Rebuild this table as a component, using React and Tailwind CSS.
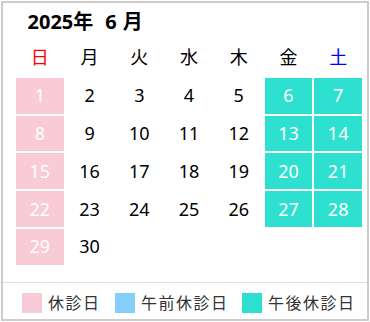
import React from "react";

const days = ["日", "月", "火", "水", "木", "金", "土"];

export default function App() {
  const cells = [];
  for (let i = 0; i < 35; i++) {
    const d = i + 1;
    const col = i % 7;
    if (d > 30) {
      cells.push(<div key={i} className="h-[35.8px]" />);
      continue;
    }
    let cls = "h-[35.8px] flex items-center justify-center text-black";
    if (col === 0) cls = "h-[35.8px] flex items-center justify-center text-white bg-[#f9cbd7]";
    else if (col === 5 || col === 6)
      cls = "h-[35.8px] flex items-center justify-center text-white bg-[#2ee0d0]";
    cells.push(
      <div key={i} className={cls}>
        {d}
      </div>
    );
  }
  return (
    <div
      className="w-[370px] h-[322px] p-[1px] bg-white"
      style={{ fontFamily: '"Noto Sans", "Noto Sans CJK JP", sans-serif' }}
    >
      <div className="h-full border-2 border-[#cccccc] flex flex-col">
        <div className="pl-[24.5px] pt-[5px] text-[20px] leading-[28px] font-bold text-black">
          <span>2025年</span>
          <span className="ml-[12px]">6</span>
          <span className="ml-[6px]">月</span>
        </div>
        <div className="ml-[13px] mt-[4px] w-[346px] grid grid-cols-7 gap-x-[2px] gap-y-[2px] text-[18px]">
          {days.map((d, i) => (
            <div
              key={d}
              className={
                "h-[35.8px] flex items-center justify-center " +
                (i === 0 ? "text-[#ff0000]" : i === 6 ? "text-[#0000ff]" : "text-black")
              }
            >
              {d}
            </div>
          ))}
          {cells}
        </div>
        <div className="flex-1" />
        <div className="h-[37px] border-t border-[#dddddd] flex items-center pt-[3px] pl-[19px] text-[16px] tracking-[1.5px] text-[#333333]">
          <div className="w-[20px] h-[20px] bg-[#f9cbd7]" />
          <span className="ml-[6px]">休診日</span>
          <div className="ml-[14.5px] w-[20px] h-[20px] bg-[#86cefa]" />
          <span className="ml-[6px]">午前休診日</span>
          <div className="ml-[13.5px] w-[20px] h-[20px] bg-[#2ee0d0]" />
          <span className="ml-[6px]">午後休診日</span>
        </div>
      </div>
    </div>
  );
}
